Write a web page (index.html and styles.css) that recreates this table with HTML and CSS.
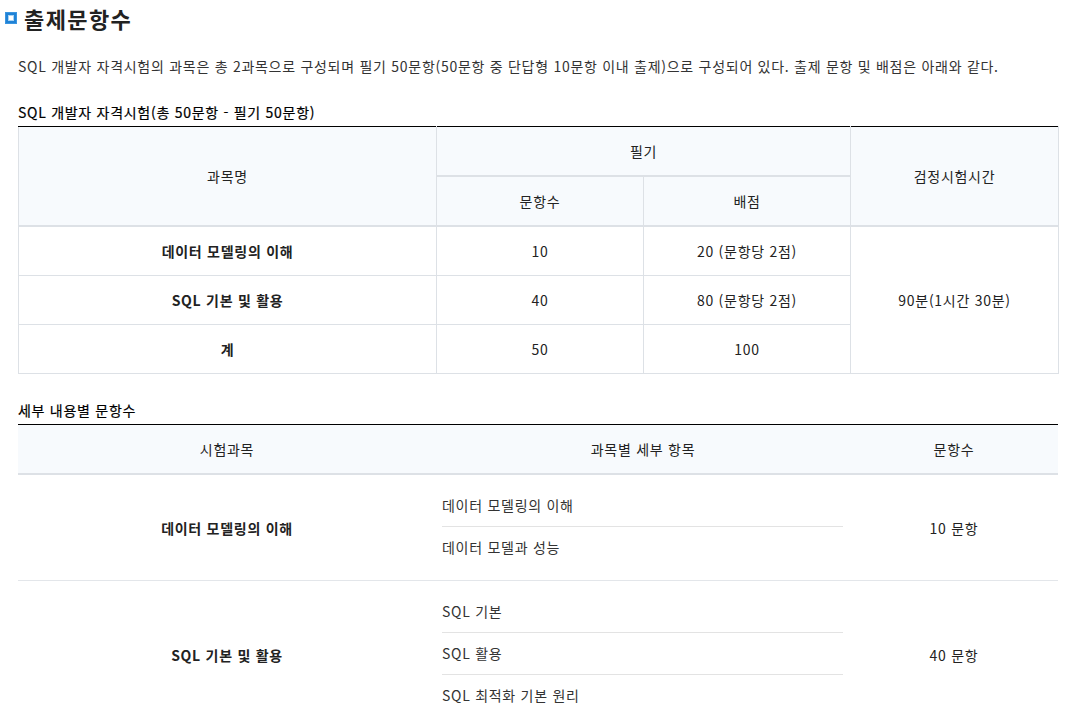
FILE: index.html
```html
<!DOCTYPE html>
<html lang="ko">
<head>
<meta charset="utf-8">
<link rel="stylesheet" href="styles.css">
</head>
<body>
<h2 class="title"><span class="title-icon"><span></span></span>출제문항수</h2>
<div class="content">
  <p class="intro">SQL 개발자 자격시험의 과목은 총 2과목으로 구성되며 필기 50문항(50문항 중 단답형 10문항 이내 출제)으로 구성되어 있다. 출제 문항 및 배점은 아래와 같다.</p>

  <h3 class="caption">SQL 개발자 자격시험(총 50문항 - 필기 50문항)</h3>
  <table class="grid">
    <colgroup>
      <col class="c1"><col class="c2"><col class="c3"><col class="c4">
    </colgroup>
    <thead>
      <tr>
        <th rowspan="2">과목명</th>
        <th colspan="2">필기</th>
        <th rowspan="2" class="last">검정시험시간</th>
      </tr>
      <tr>
        <th>문항수</th>
        <th>배점</th>
      </tr>
    </thead>
    <tbody>
      <tr>
        <td class="b">데이터 모델링의 이해</td>
        <td>10</td>
        <td>20 (문항당 2점)</td>
        <td rowspan="3">90분(1시간 30분)</td>
      </tr>
      <tr>
        <td class="b">SQL 기본 및 활용</td>
        <td>40</td>
        <td>80 (문항당 2점)</td>
      </tr>
      <tr>
        <td class="b">계</td>
        <td>50</td>
        <td>100</td>
      </tr>
    </tbody>
  </table>

  <h3 class="caption second">세부 내용별 문항수</h3>
  <table class="detail">
    <colgroup>
      <col class="c1"><col class="c23"><col class="c4">
    </colgroup>
    <thead>
      <tr>
        <th>시험과목</th>
        <th>과목별 세부 항목</th>
        <th>문항수</th>
      </tr>
    </thead>
    <tbody>
      <tr>
        <td class="b">데이터 모델링의 이해</td>
        <td class="items">
          <ul>
            <li>데이터 모델링의 이해</li>
            <li>데이터 모델과 성능</li>
          </ul>
        </td>
        <td>10 문항</td>
      </tr>
      <tr>
        <td class="b">SQL 기본 및 활용</td>
        <td class="items">
          <ul>
            <li>SQL 기본</li>
            <li>SQL 활용</li>
            <li>SQL 최적화 기본 원리</li>
          </ul>
        </td>
        <td>40 문항</td>
      </tr>
    </tbody>
  </table>
</div>
</body>
</html>
```

FILE: styles.css
```css
html, body {
  margin: 0;
  padding: 0;
  background: #fff;
}
body {
  font-family: "Noto Sans CJK KR", "Noto Sans", sans-serif;
  color: #333;
  font-size: 14px;
  letter-spacing: 0.72px;
}
.title {
  display: flex;
  align-items: center;
  gap: 7px;
  margin: 0;
  padding: 3px 0 0 5px;
  height: 29px;
  font-size: 22px;
  font-weight: 700;
  color: #222;
  line-height: 26px;
  letter-spacing: 1.4px;
}
.title-icon {
  width: 12px;
  height: 12px;
  background: #1f82d6;
  display: flex;
  align-items: center;
  justify-content: center;
  box-sizing: border-box;
  border: 1px solid #3b95e0;
}
.title-icon span {
  width: 4px;
  height: 4px;
  background: #fff;
  box-shadow: 0 0 0 1px #a9d3f3;
}
.content {
  padding: 0 8px 0 18px;
}
.intro {
  margin: 24px 0 0;
  line-height: 20px;
  color: #333;
}
.caption {
  margin: 26px 0 0;
  font-size: 14px;
  font-weight: 400;
  color: #000;
  line-height: 20px;
  padding-bottom: 4px;
  -webkit-text-stroke: 0.2px #000;
}
.caption.second {
  margin-top: 26px;
}
table {
  width: 1040px;
  border-collapse: collapse;
  table-layout: fixed;
  border-top: 1px solid #000;
}
col.c1 { width: 418px; }
col.c2 { width: 207px; }
col.c3 { width: 207px; }
col.c4 { width: 208px; }
col.c23 { width: 414px; }

.grid th, .grid td {
  border: 1px solid #dde1e6;
  text-align: center;
  font-weight: 400;
  color: #222;
  padding: 0;
  height: 48px;
  line-height: 20px;
}
.grid th {
  background: #f7fafd;
  border-bottom: 2px solid #dde1e6;
}
.grid tr:first-child th {
  border-top: 1px solid #000;
}
.grid td.b, .detail td.b {
  font-weight: 700;
  color: #222;
}
.detail th {
  background: #f7fafd;
  border-bottom: 2px solid #dde1e6;
  font-weight: 400;
  color: #222;
  height: 48px;
  padding: 0;
  line-height: 20px;
}
.detail td {
  text-align: center;
  color: #222;
  border-bottom: 1px solid #e3e6ea;
  padding: 0;
  line-height: 20px;
}
.detail td.items {
  padding: 10px 7px 12px 6px;
  text-align: left;
}
.detail ul {
  list-style: none;
  margin: 0;
  padding: 0;
}
.detail li {
  height: 41px;
  line-height: 41px;
  border-bottom: 1px solid #e3e3e3;
  color: #333;
}
.detail li:last-child {
  border-bottom: 0;
}
```
